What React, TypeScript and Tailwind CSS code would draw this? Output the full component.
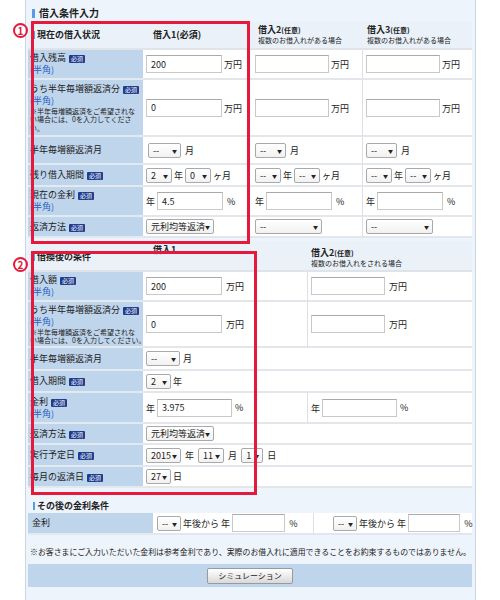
import React from 'react';

function Badge() {
  return (
    <span className="ml-[3px] inline-block h-[8px] rounded-[1px] bg-[#1f3d8c] px-[2px] align-[0px] text-[6px] leading-[8px] text-white">
      必須
    </span>
  );
}

function Half() {
  return <div className="text-[#2a62c0]">(半角)</div>;
}

function Sel({ v, className }: { v: string; className: string }) {
  return (
    <span className={`inline-flex h-[15px] items-center justify-between rounded-[2px] border border-[#a9a9a9] bg-gradient-to-b from-white to-[#f1f1f1] pl-[4px] pr-[3px] align-middle text-[9px] leading-none text-[#222] ${className}`}>
      <span>{v}</span>
      <span className="text-[5px]">▼</span>
    </span>
  );
}

function Inp({ v, className }: { v?: string; className: string }) {
  return (
    <input
      readOnly
      defaultValue={v ?? ''}
      className={`h-[18px] border border-[#c9c9c9] border-t-[#aaaaaa] bg-white px-[4px] align-middle text-[9px] text-[#222] outline-none ${className}`}
    />
  );
}

function Unit({ children, className = '' }: { children: React.ReactNode; className?: string }) {
  return <span className={`align-middle text-[9px] text-[#222] ${className}`}>{children}</span>;
}

const labelTd = 'bg-[#bfd5ec] pl-[2px] align-middle text-[9px] leading-[12px] text-[#222] border-b-2 border-[#e2e9f1]';
const dataTd = 'bg-white px-[3px] align-middle text-[9px] leading-[11px] border-b-2 border-[#e3e6ea] whitespace-nowrap';
const headTd = 'bg-[#eaf1f9] border-b-2 border-[#e0e4e9] text-[9px] leading-[10px]';

function Note({ lines }: { lines: string[] }) {
  return (
    <div className="whitespace-nowrap text-[7px] leading-[8.5px]">
      {lines.map((l) => (
        <div key={l}>{l}</div>
      ))}
    </div>
  );
}

function SectionHead({ children }: { children: React.ReactNode }) {
  return (
    <div className="flex items-center gap-[2px] pl-[5px] text-[9px] font-bold leading-[12px]">
      <span className="h-[8px] w-[2px] bg-[#5b9be3]" />
      {children}
    </div>
  );
}

function Circle({ n, className }: { n: string; className: string }) {
  return (
    <div className={`absolute flex h-[15px] w-[15px] items-center justify-center rounded-full border-2 border-[#e6193c] text-[10px] font-bold leading-none text-[#e6193c] ${className}`}>
      {n}
    </div>
  );
}

const sep = 'border-l border-l-[#dcdfe3]';

export default function App() {
  return (
    <div className="relative h-[600px] w-[500px] overflow-hidden bg-white font-['Noto_Sans_CJK_JP','Noto_Sans',sans-serif] text-[#222]">
      <div className="ml-[25px] h-full w-[451px] border-x border-[#c9d5e2] bg-[#eef4fb] px-[2px]">
        <div className="flex h-[22px] items-center gap-[4px] pl-[4px] pt-[4px]">
          <span className="h-[9px] w-[3px] bg-[#5b9be3]" />
          <span className="text-[10px] font-bold leading-[12px]">借入条件入力</span>
        </div>

        <table className="w-[444px] table-fixed border-separate border-spacing-0">
          <colgroup>
            <col className="w-[115px]" />
            <col className="w-[109px]" />
            <col className="w-[110px]" />
            <col className="w-[110px]" />
          </colgroup>
          <tbody>
            <tr className="h-[28px]">
              <td className={headTd}>
                <SectionHead>現在の借入状況</SectionHead>
              </td>
              <td className={`${headTd} pl-[10px] text-[8px] font-bold`}>借入1(必須)</td>
              <td className={`${headTd} pl-[6px]`}>
                <div className="font-bold">
                  <span className="text-[9px]">借入2</span>
                  <span className="text-[7px]">(任意)</span>
                </div>
                <div className="whitespace-nowrap text-[7px]">複数のお借入れがある場合</div>
              </td>
              <td className={`${headTd} pl-[5px]`}>
                <div className="font-bold">
                  <span className="text-[9px]">借入3</span>
                  <span className="text-[7px]">(任意)</span>
                </div>
                <div className="whitespace-nowrap text-[7px]">複数のお借入れがある場合</div>
              </td>
            </tr>
            <tr className="h-[30px]">
              <td className={labelTd}>
                借入残高<Badge />
                <Half />
              </td>
              <td className={dataTd}>
                <Inp v="200" className="w-[76px]" /> <Unit>万円</Unit>
              </td>
              <td className={dataTd}>
                <Inp className="w-[74px]" /> <Unit>万円</Unit>
              </td>
              <td className={`${dataTd} ${sep}`}>
                <Inp className="w-[74px]" /> <Unit>万円</Unit>
              </td>
            </tr>
            <tr className="h-[57px]">
              <td className={labelTd}>
                うち半年毎増額返済分<Badge />
                <Half />
                <Note lines={['※半年毎増額返済をご希望されな', 'い場合には、0を入力してくださ', 'い。']} />
              </td>
              <td className={dataTd}>
                <Inp v="0" className="w-[76px]" /> <Unit>万円</Unit>
              </td>
              <td className={dataTd}>
                <Inp className="w-[74px]" /> <Unit>万円</Unit>
              </td>
              <td className={`${dataTd} ${sep}`}>
                <Inp className="w-[74px]" /> <Unit>万円</Unit>
              </td>
            </tr>
            <tr className="h-[28px]">
              <td className={labelTd}>半年毎増額返済月</td>
              <td className={`${dataTd} pl-[5px]`}>
                <Sel v="--" className="w-[33px]" /> <Unit className="ml-[2px]">月</Unit>
              </td>
              <td className={dataTd}>
                <Sel v="--" className="w-[31px]" /> <Unit className="ml-[2px]">月</Unit>
              </td>
              <td className={`${dataTd} ${sep}`}>
                <Sel v="--" className="w-[31px]" /> <Unit className="ml-[2px]">月</Unit>
              </td>
            </tr>
            <tr className="h-[22px]">
              <td className={labelTd}>
                残り借入期間<Badge />
              </td>
              <td className={dataTd}>
                <Sel v="2" className="w-[26px]" /> <Unit>年</Unit> <Sel v="0" className="w-[26px]" />{' '}
                <Unit>ヶ月</Unit>
              </td>
              <td className={dataTd}>
                <Sel v="--" className="w-[26px]" /> <Unit>年</Unit> <Sel v="--" className="w-[26px]" />{' '}
                <Unit>ヶ月</Unit>
              </td>
              <td className={`${dataTd} ${sep}`}>
                <Sel v="--" className="w-[26px]" /> <Unit>年</Unit> <Sel v="--" className="w-[26px]" />{' '}
                <Unit>ヶ月</Unit>
              </td>
            </tr>
            <tr className="h-[30px]">
              <td className={labelTd}>
                現在の金利<Badge />
                <Half />
              </td>
              <td className={dataTd}>
                <Unit>年</Unit> <Inp v="4.5" className="w-[66px]" /> <Unit className="ml-[2px]">%</Unit>
              </td>
              <td className={dataTd}>
                <Unit>年</Unit> <Inp className="w-[66px]" /> <Unit className="ml-[2px]">%</Unit>
              </td>
              <td className={`${dataTd} ${sep}`}>
                <Unit>年</Unit> <Inp className="w-[66px]" /> <Unit className="ml-[2px]">%</Unit>
              </td>
            </tr>
            <tr className="h-[21px]">
              <td className={labelTd}>
                返済方法<Badge />
              </td>
              <td className={dataTd}>
                <Sel v="元利均等返済" className="w-[68px]" />
              </td>
              <td className={dataTd}>
                <Sel v="--" className="w-[67px]" />
              </td>
              <td className={`${dataTd} ${sep}`}>
                <Sel v="--" className="w-[67px]" />
              </td>
            </tr>
          </tbody>
        </table>

        <table className="mt-[3px] w-[444px] table-fixed border-separate border-spacing-0">
          <colgroup>
            <col className="w-[115px]" />
            <col className="w-[164px]" />
            <col className="w-[165px]" />
          </colgroup>
          <tbody>
            <tr className="h-[31px]">
              <td className={`${headTd} align-bottom pb-[7px]`}>
                <SectionHead>借換後の条件</SectionHead>
              </td>
              <td className={`${headTd} align-top pl-[10px] pt-[4px] text-[8px] font-bold`}>借入1</td>
              <td className={`${headTd} align-bottom pb-[2px] pl-[4px]`}>
                <div className="font-bold">
                  <span className="text-[9px]">借入2</span>
                  <span className="text-[7px]">(任意)</span>
                </div>
                <div className="whitespace-nowrap text-[7px]">複数のお借入れをされる場合</div>
              </td>
            </tr>
            <tr className="h-[30px]">
              <td className={labelTd}>
                借入額<Badge />
                <Half />
              </td>
              <td className={dataTd}>
                <Inp v="200" className="w-[76px]" /> <Unit className="ml-[2px]">万円</Unit>
              </td>
              <td className={`${dataTd} ${sep}`}>
                <Inp className="w-[74px]" /> <Unit className="ml-[2px]">万円</Unit>
              </td>
            </tr>
            <tr className="h-[46px]">
              <td className={labelTd}>
                うち半年毎増額返済分<Badge />
                <Half />
                <Note lines={['※半年毎増額返済をご希望されな', 'い場合には、0を入力してください。']} />
              </td>
              <td className={dataTd}>
                <Inp v="0" className="w-[76px]" /> <Unit className="ml-[2px]">万円</Unit>
              </td>
              <td className={`${dataTd} ${sep}`}>
                <Inp className="w-[74px]" /> <Unit className="ml-[2px]">万円</Unit>
              </td>
            </tr>
            <tr className="h-[23px]">
              <td className={labelTd}>半年毎増額返済月</td>
              <td className={dataTd} colSpan={2}>
                <Sel v="--" className="w-[34px]" /> <Unit className="ml-[1px]">月</Unit>
              </td>
            </tr>
            <tr className="h-[22px]">
              <td className={labelTd}>
                借入期間<Badge />
              </td>
              <td className={dataTd} colSpan={2}>
                <Sel v="2" className="w-[25px]" /> <Unit>年</Unit>
              </td>
            </tr>
            <tr className="h-[31px]">
              <td className={labelTd}>
                金利<Badge />
                <Half />
              </td>
              <td className={dataTd}>
                <Unit>年</Unit> <Inp v="3.975" className="w-[75px]" /> <Unit className="ml-[1px]">%</Unit>
              </td>
              <td className={`${dataTd} ${sep}`}>
                <Unit>年</Unit> <Inp className="w-[75px]" /> <Unit className="ml-[1px]">%</Unit>
              </td>
            </tr>
            <tr className="h-[21px]">
              <td className={labelTd}>
                返済方法<Badge />
              </td>
              <td className={dataTd} colSpan={2}>
                <Sel v="元利均等返済" className="w-[68px]" />
              </td>
            </tr>
            <tr className="h-[22px]">
              <td className={labelTd}>
                実行予定日<Badge />
              </td>
              <td className={dataTd} colSpan={2}>
                <Sel v="2015" className="w-[35px]" /> <Unit className="mx-[2px]">年</Unit>{' '}
                <Sel v="11" className="w-[26px]" /> <Unit className="mx-[2px]">月</Unit>{' '}
                <Sel v="1" className="w-[22px]" /> <Unit className="ml-[2px]">日</Unit>
              </td>
            </tr>
            <tr className="h-[21px]">
              <td className={labelTd}>
                毎月の返済日<Badge />
              </td>
              <td className={dataTd} colSpan={2}>
                <Sel v="27" className="w-[25px]" /> <Unit>日</Unit>
              </td>
            </tr>
          </tbody>
        </table>

        <div className="flex h-[25px] items-end pb-[1px]">
          <SectionHead>その後の金利条件</SectionHead>
        </div>
        <table className="w-[444px] table-fixed border-separate border-spacing-0">
          <colgroup>
            <col className="w-[125px]" />
            <col className="w-[160px]" />
            <col className="w-[159px]" />
          </colgroup>
          <tbody>
            <tr className="h-[22px]">
              <td className={`${labelTd} border-b-0 pl-[4px]`}>金利</td>
              <td className={`${dataTd} border-b-0 pl-[4px]`}>
                <Sel v="--" className="w-[24px]" /> <Unit className="text-[8px]">年後から 年</Unit>{' '}
                <Inp className="w-[53px]" /> <Unit className="ml-[2px] text-[8px]">%</Unit>
              </td>
              <td className={`${dataTd} border-b-0 ${sep} pl-[19px]`}>
                <Sel v="--" className="w-[24px]" /> <Unit className="text-[8px]">年後から 年</Unit>{' '}
                <Inp className="w-[52px]" /> <Unit className="ml-[2px] text-[8px]">%</Unit>
              </td>
            </tr>
          </tbody>
        </table>
        <div className="h-[29px] whitespace-nowrap pl-[2px] pt-[12px] text-[7.9px] leading-[10px]">
          ※お客さまにご入力いただいた金利は参考金利であり、実際のお借入れに適用できることをお約束するものではありません。
        </div>
        <div className="flex h-[23px] w-[444px] items-center justify-center bg-[#bfd5ec]">
          <button className="h-[16px] w-[86px] rounded-[2px] border border-[#9a9a9a] bg-gradient-to-b from-white to-[#d9d9d9] text-[8px] leading-none text-[#222]">
            シミュレーション
          </button>
        </div>
      </div>

      <div className="pointer-events-none absolute left-[31px] top-[21px] h-[223px] w-[219px] border-[3px] border-[#e6193c]" />
      <Circle n="1" className="left-[13px] top-[23px]" />
      <div className="pointer-events-none absolute left-[31px] top-[251px] h-[244px] w-[226px] border-[3px] border-[#e6193c]" />
      <Circle n="2" className="left-[13px] top-[257px]" />
    </div>
  );
}
